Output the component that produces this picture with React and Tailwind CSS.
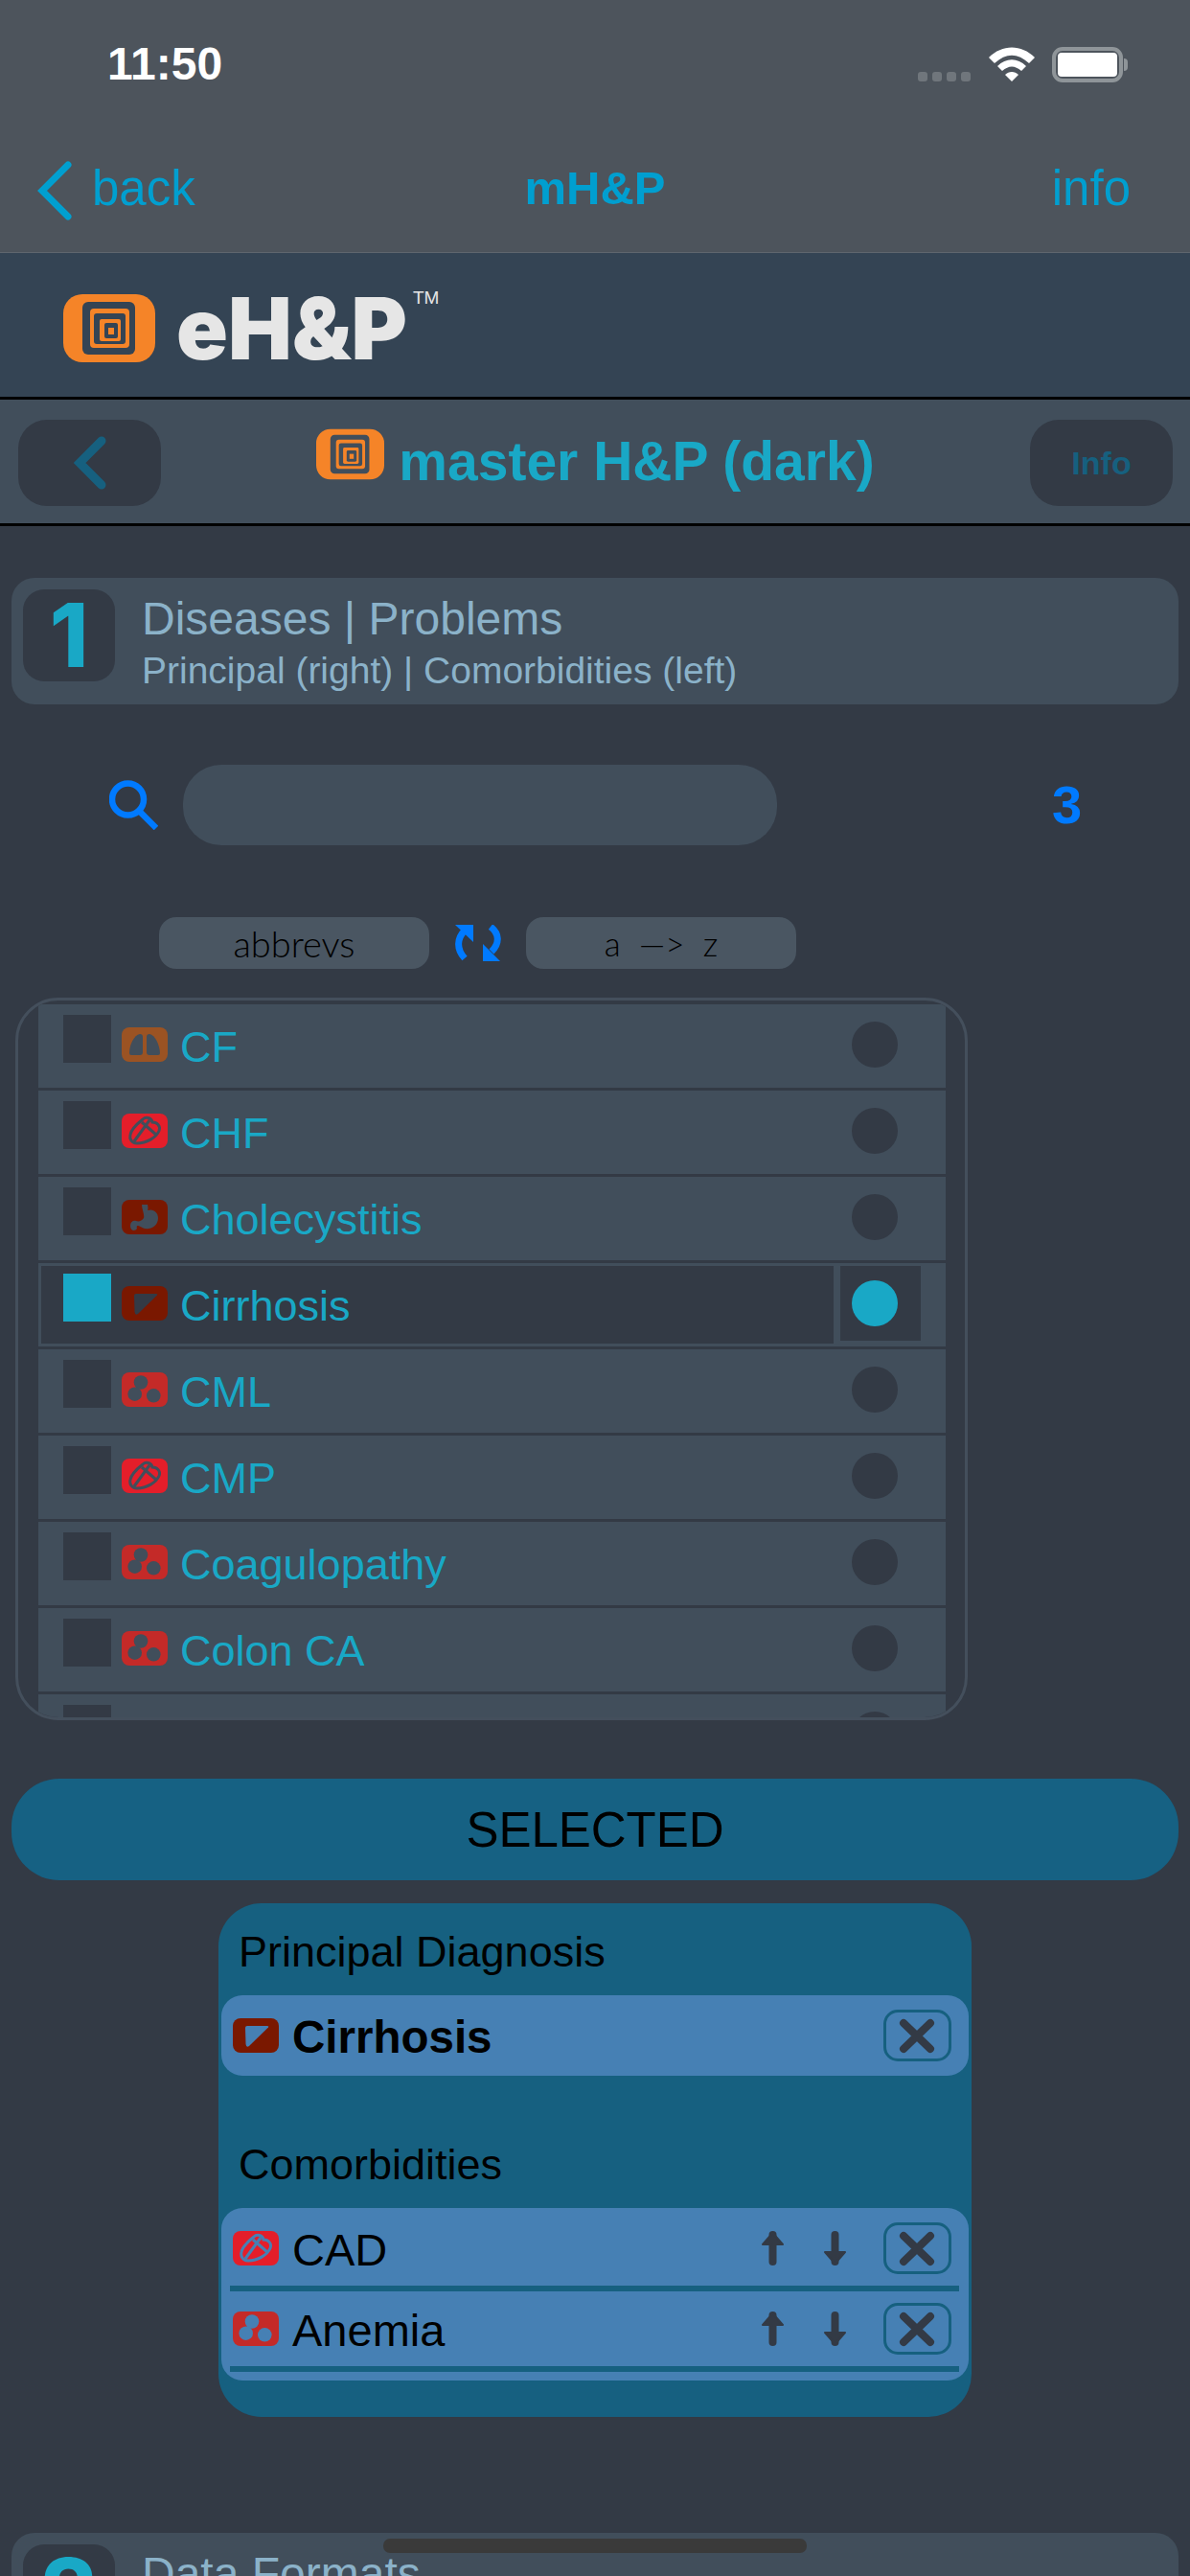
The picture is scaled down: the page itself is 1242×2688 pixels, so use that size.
const rows = [
  { name: 'CF', icon: 'lungs' },
  { name: 'CHF', icon: 'heart' },
  { name: 'Cholecystitis', icon: 'stomach' },
  { name: 'Cirrhosis', icon: 'liver', selected: true },
  { name: 'CML', icon: 'cells' },
  { name: 'CMP', icon: 'heart' },
  { name: 'Coagulopathy', icon: 'cells' },
  { name: 'Colon CA', icon: 'cells' },
  { name: '', icon: 'gland' },
];

const iconColors = {
  lungs: 'bg-[#9b5323]',
  heart: 'bg-[#e41e2a]',
  stomach: 'bg-[#7a1800]',
  liver: 'bg-[#7a1800]',
  cells: 'bg-[#c42a28]',
  gland: 'bg-[#a87035]',
};

function OrganIcon({ type, cut }) {
  return (
    <div className={`w-[48px] h-[36px] rounded-[8px] shrink-0 ${iconColors[type]} ${cut}`}>
      <svg viewBox="0 0 48 36" className="w-[48px] h-[36px]">
        {type === 'lungs' && (
          <g fill="currentColor">
            <path d="M19 7Q22 7 22 10L22 26Q22 29 19 29L10 29Q8 29 8 27C8 18 13 8 19 7Z" />
            <path d="M29 7Q26 7 26 10L26 26Q26 29 29 29L38 29Q40 29 40 27C39.5 18 35 8 29 7Z" />
          </g>
        )}
        {type === 'heart' && (
          <g fill="none" stroke="currentColor" strokeWidth="3">
            <path d="M22 6C25 3 31 4 32 9C37 9 41 13 39 18C36 25 26 31 16 31C10 31 8 26 9 22C10 16 17 10 22 6Z" />
            <path d="M13 29L29 7" />
            <path d="M21 9L36 22" />
          </g>
        )}
        {type === 'stomach' && (
          <path
            fill="currentColor"
            d="M21 5L27 5Q28 9 27 11C33 9 38 13 38 19C38 27 31 31 24 30C21 29.5 19 27 17 27Q15 27 16 30Q15 32 12 32Q9 31 9 27C9 23 12 21 15 22C18 23 21 22 23 19C24 15 21 10 21 5Z"
          />
        )}
        {type === 'liver' && (
          <path fill="currentColor" d="M15 8L36 8Q38 8 37 9.5L17 29Q14 31 13.5 27L13 10Q13 8 15 8Z" />
        )}
        {type === 'cells' && (
          <g fill="currentColor">
            <circle cx="20" cy="10.5" r="7.3" />
            <circle cx="13.7" cy="22.7" r="7.3" />
            <circle cx="33.3" cy="24.3" r="7.3" />
          </g>
        )}
      </svg>
    </div>
  );
}

function Logo({ className, cut }) {
  return (
    <svg viewBox="0 0 96 71" className={`${className} ${cut}`}>
      <rect width="96" height="71" rx="20" fill="#f58428" />
      <rect x="20" y="8" width="55" height="55" rx="6" fill="currentColor" />
      <rect x="28" y="15" width="41" height="41" rx="4" fill="#f58428" />
      <rect x="32" y="20" width="33" height="32" rx="3" fill="currentColor" />
      <rect x="38" y="26" width="22" height="23" rx="2" fill="#f58428" />
      <rect x="43" y="30" width="14" height="16" rx="2" fill="currentColor" />
      <rect x="47" y="35" width="6" height="7" fill="#f58428" />
    </svg>
  );
}

function StepCard({ number, title, subtitle }) {
  return (
    <div className="mx-[12px] h-[132px] shrink-0 flex items-start p-[12px] rounded-[24px] bg-[#414e5b]">
      <div className="w-[96px] h-[96px] shrink-0 flex items-center justify-center rounded-[22px] bg-[#333a45] font-['Inter',sans-serif] font-extrabold text-[92px] leading-none text-[#19a8c6]">
        {number}
      </div>
      <div className="ml-[28px] text-[#8bb2c9]">
        <p className="mt-[7px] text-[48px] leading-none">{title}</p>
        {subtitle && <p className="mt-[10px] text-[39px] leading-none">{subtitle}</p>}
      </div>
    </div>
  );
}

function CloseButton() {
  return (
    <button className="block w-[71px] h-[54px] shrink-0 rounded-[15px] border-[3px] border-[#16607f]">
      <svg viewBox="0 0 65 48" className="w-[65px] h-[48px]">
        <path d="M18 11L46 38M46 11L18 38" stroke="#333a45" strokeWidth="8" strokeLinecap="round" />
      </svg>
    </button>
  );
}

function MoveArrow({ down }) {
  return (
    <svg viewBox="0 0 25 36" className={`w-[25px] h-[36px] shrink-0 ${down ? 'rotate-180' : ''}`}>
      <path d="M12.5 4L12.5 32" stroke="#333a45" strokeWidth="8" strokeLinecap="round" />
      <path d="M12.5 2L2 14H23Z" fill="#333a45" stroke="#333a45" strokeWidth="2" strokeLinejoin="round" />
    </svg>
  );
}

function ComorbidityRow({ name, icon }) {
  return (
    <>
      <div className="h-[78px] flex items-start pl-[12px] pr-[18px]">
        <div className="mt-[21px]">
          <OrganIcon type={icon} cut="text-[#4680b4]" />
        </div>
        <p className="ml-[14px] mt-[17px] text-[47px] leading-none text-black">{name}</p>
        <div className="ml-auto mt-[21px]">
          <MoveArrow />
        </div>
        <div className="ml-[40px] mt-[21px]">
          <MoveArrow down />
        </div>
        <div className="ml-[38px] mt-[12px]">
          <CloseButton />
        </div>
      </div>
      <div className="h-[6px] ml-[9px] mr-[10px] bg-[#166080]" />
    </>
  );
}

export default function App() {
  return (
    <div className="relative w-[1242px] h-[2688px] overflow-hidden flex flex-col bg-[#333a45] font-['Liberation_Sans',Arial,sans-serif]">
      <div className="h-[264px] shrink-0 bg-[#4d545c] border-b border-[#5f666e]">
        <div className="h-[134px] flex items-center pl-[112px] pr-[65px]">
          <span className="text-[48px] font-bold leading-none text-white">11:50</span>
          <div className="ml-auto flex items-center">
            <div className="flex gap-[5px] mt-[26px]">
              <span className="w-[10px] h-[10px] rounded-[3px] bg-[#70767c]" />
              <span className="w-[10px] h-[10px] rounded-[3px] bg-[#70767c]" />
              <span className="w-[10px] h-[10px] rounded-[3px] bg-[#70767c]" />
              <span className="w-[10px] h-[10px] rounded-[3px] bg-[#70767c]" />
            </div>
            <svg viewBox="0 0 48 36" className="ml-[19px] w-[48px] h-[36px]">
              <g fill="#fff">
                <path d="M0 11C14 -3 34 -3 48 11L42 17C30 6 18 6 6 17Z" />
                <path d="M9 20C18 11 30 11 39 20L34 25C27 19 21 19 14 25Z" />
                <path d="M17 29C21 25 27 25 31 29L24 36Z" />
              </g>
            </svg>
            <div className="ml-[18px] w-[74px] h-[37px] p-[2px] rounded-[11px] border-[4px] border-[#8f9599]">
              <div className="w-full h-full rounded-[4px] bg-white" />
            </div>
            <div className="ml-[1px] w-[4px] h-[13px] rounded-r-[4px] bg-[#8f9599]" />
          </div>
        </div>
        <div className="h-[129px] flex items-center justify-between pl-[39px] pr-[62px] text-[51px] leading-none text-[#009fd0]">
          <div className="w-[263px] flex items-center">
            <svg viewBox="0 0 36 62" className="w-[36px] h-[62px]">
              <path d="M32 4L5 31L32 58" fill="none" stroke="#009fd0" strokeWidth="7" strokeLinecap="round" />
            </svg>
            <span className="ml-[21px] mt-[-4px]">back</span>
          </div>
          <span className="font-bold text-[49px] mt-[-4px]">mH&amp;P</span>
          <span className="w-[240px] text-right mt-[-4px]">info</span>
        </div>
      </div>

      <div className="h-[153px] shrink-0 flex items-center pl-[66px] bg-[#344454] border-b-[3px] border-black">
        <Logo className="w-[96px] h-[71px] shrink-0 mt-[6px]" cut="text-[#344454]" />
        <div className="ml-[22px] mt-[6px] flex items-start text-[#e6e6e6]">
          <span className="font-['Inter',sans-serif] font-black text-[89px] leading-none">eH&amp;P</span>
          <span className="ml-[6px] mt-[3px] text-[19px] leading-none">TM</span>
        </div>
      </div>

      <div className="h-[132px] shrink-0 flex items-center justify-between pl-[19px] pr-[18px] bg-[#414e5b] border-b-[3px] border-black">
        <button className="w-[149px] h-[90px] mt-[3px] flex items-center justify-center rounded-[30px] bg-[#333a45]">
          <svg viewBox="0 0 34 56" className="w-[34px] h-[56px]">
            <path d="M29 5L6 28L29 51" fill="none" stroke="#16607f" strokeWidth="9" strokeLinecap="round" />
          </svg>
        </button>
        <div className="flex items-start mt-[-6px]">
          <Logo className="w-[71px] h-[54px] shrink-0" cut="text-[#414e5b]" />
          <span className="ml-[15px] mt-[6px] font-bold text-[57px] leading-none text-[#19a8c6]">master H&amp;P (dark)</span>
        </div>
        <button className="w-[149px] h-[90px] mt-[3px] rounded-[30px] bg-[#333a45] font-bold text-[34px] text-[#16607f]">
          Info
        </button>
      </div>

      <div className="mt-[54px]">
        <StepCard number="1" title="Diseases | Problems" subtitle="Principal (right) | Comorbidities (left)" />
      </div>

      <div className="mt-[63px] h-[84px] shrink-0 flex items-center pl-[114px]">
        <svg viewBox="0 0 51 52" className="w-[51px] h-[52px] shrink-0">
          <circle cx="19.5" cy="20" r="16.5" fill="none" stroke="#007aff" strokeWidth="6.5" />
          <path d="M31 32L49 50" stroke="#007aff" strokeWidth="6.5" />
        </svg>
        <div className="ml-[26px] w-[620px] h-[84px] rounded-[40px] bg-[#414e5b]" />
        <span className="ml-[287px] font-bold text-[56px] leading-none text-[#007aff]">3</span>
      </div>

      <div className="mt-[75px] h-[54px] shrink-0 flex items-center pl-[166px]">
        <button className="w-[282px] h-[54px] rounded-[18px] bg-[#4a5662] font-['Lato',sans-serif] font-light text-[38px] leading-none text-black">
          abbrevs
        </button>
        <svg viewBox="0 0 48 38" className="ml-[27px] w-[48px] h-[38px] shrink-0">
          <g fill="none" stroke="#007aff" strokeWidth="7">
            <path d="M10 6C2 14 1 25 10 35" />
            <path d="M37 2C46 9 47 19 38 28" />
          </g>
          <path d="M0 0L19 0L19 18Z" fill="#007aff" />
          <path d="M29 38L47 38L29 20Z" fill="#007aff" />
        </svg>
        <button className="ml-[26px] w-[282px] h-[54px] rounded-[18px] bg-[#4a5662] font-['Lato',sans-serif] font-light text-[35px] leading-none text-black whitespace-pre">
          {'a  —>  z'}
        </button>
      </div>

      <div className="mt-[30px] ml-[16px] w-[994px] h-[754px] shrink-0 overflow-hidden rounded-[45px] border-[3px] border-[#444f5c] pt-[4px] pl-[21px]">
        {rows.map((row, i) => (
          <div key={i} className="w-[947px] h-[87px] mb-[3px] flex bg-[#414e5b]">
            <div
              className={`ml-[3px] mt-[3px] w-[827px] h-[81px] flex items-start pl-[23px] ${
                row.selected ? 'bg-[#333a45]' : ''
              }`}
            >
              <div className={`w-[50px] h-[50px] mt-[8px] shrink-0 ${row.selected ? 'bg-[#19a8c6]' : 'bg-[#333a45]'}`} />
              <div className="ml-[11px] mt-[21px]">
                <OrganIcon type={row.icon} cut={row.selected ? 'text-[#333a45]' : 'text-[#414e5b]'} />
              </div>
              <p className="ml-[13px] mt-[19px] text-[45px] leading-none text-[#19a8c6]">{row.name}</p>
            </div>
            <div className={`ml-[7px] mt-[3px] w-[84px] h-[78px] pl-[12px] pt-[15px] ${row.selected ? 'bg-[#333a45]' : ''}`}>
              <div className={`w-[48px] h-[48px] rounded-full ${row.selected ? 'bg-[#19a8c6]' : 'bg-[#333a45]'}`} />
            </div>
          </div>
        ))}
      </div>

      <div className="mt-[61px] mx-[12px] h-[106px] shrink-0 flex items-center justify-center rounded-[50px] bg-[#166183] text-[51px] leading-none text-black">
        SELECTED
      </div>

      <div className="mt-[24px] ml-[228px] w-[786px] h-[536px] shrink-0 rounded-[45px] bg-[#166080] px-[3px] pt-[28px]">
        <p className="pl-[18px] text-[45px] leading-none text-black">Principal Diagnosis</p>
        <div className="mt-[23px] h-[84px] flex items-start pl-[12px] pr-[18px] rounded-[22px] bg-[#4680b4]">
          <div className="mt-[24px]">
            <OrganIcon type="liver" cut="text-[#4680b4]" />
          </div>
          <p className="ml-[14px] mt-[20px] font-bold text-[47.5px] leading-none text-black">Cirrhosis</p>
          <div className="ml-auto mt-[15px]">
            <CloseButton />
          </div>
        </div>
        <p className="mt-[70px] pl-[18px] text-[45px] leading-none text-black">Comorbidities</p>
        <div className="mt-[23px] h-[180px] pt-[3px] rounded-[22px] bg-[#4680b4]">
          <ComorbidityRow name="CAD" icon="heart" />
          <ComorbidityRow name="Anemia" icon="cells" />
        </div>
      </div>

      <div className="mt-[121px]">
        <StepCard number="2" title="Data Formats" />
      </div>

      {/* home indicator sits over the page */}
      <div className="absolute left-[400px] top-[2649px] w-[442px] h-[15px] rounded-[7px] bg-[#3a3a3a]" />
    </div>
  );
}
